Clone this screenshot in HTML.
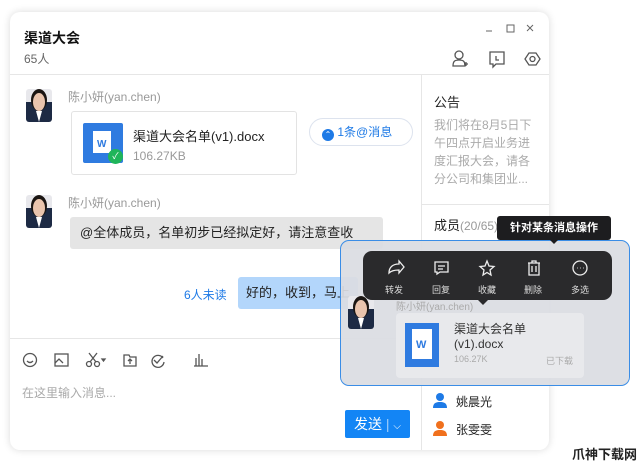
<!DOCTYPE html><html><head><meta charset="utf-8"><style>
*{margin:0;padding:0;box-sizing:border-box}
body{width:640px;height:460px;background:#fff;font-family:"Liberation Sans","Noto Sans CJK SC",sans-serif;position:relative;overflow:hidden}
.a{position:absolute}
.win{left:10px;top:12px;width:539px;height:438px;border-radius:10px;box-shadow:0 0 8px rgba(0,0,0,.15);background:#fff;overflow:hidden}
.av{width:26px;height:33px;border-radius:3px;background:linear-gradient(#e8e8ec 0 40%,#1d2a44 40%);overflow:hidden}
.av:before{content:"";position:absolute;left:7px;top:4px;width:12px;height:18px;border-radius:50%;background:#e9c4ad;box-shadow:0 -2px 0 2px #1a1512}
.av:after{content:"";position:absolute;left:10px;top:22px;width:6px;height:11px;background:#fff;clip-path:polygon(0 0,100% 0,50% 100%)}
.g{color:#999}
.icn{stroke:#555;fill:none;stroke-width:1.3}
</style></head><body>
<div class="a win">
 <div class="a" style="left:14px;top:16px;font-size:14px;font-weight:bold;color:#111">渠道大会</div>
 <div class="a" style="left:14px;top:38px;font-size:12px;color:#666">65人</div>
 <svg class="a" style="left:472px;top:10px" width="60" height="14"><path d="M4 9h6" stroke="#666"/><rect x="25" y="3" width="7" height="7" stroke="#666" fill="none"/><path d="M45 3l6 6M51 3l-6 6" stroke="#666"/></svg>
 <svg class="a icn" style="left:440px;top:36px" width="100" height="22"><circle cx="9" cy="7" r="4"/><path d="M3 18c0-5 2-6 6-6s6 1 6 6zM14 16h4M16 14v4"/><path d="M40 4h14v12h-8l-3 3v-3h-3z"/><path d="M46 8v4h3"/><path d="M75 11l4-6h7l4 6-4 6h-7z"/><circle cx="82.5" cy="11" r="2.5"/></svg>
 <div class="a" style="left:0;top:62px;width:539px;border-top:1px solid #e6e6e6"></div>
 <div class="a" style="left:411px;top:62px;height:376px;border-left:1px solid #e6e6e6"></div>
 <div class="a" style="left:0;top:326px;width:411px;border-top:1px solid #e6e6e6"></div>
 <div class="a" style="left:411px;top:192px;width:128px;border-top:1px solid #e6e6e6"></div>
 <div class="a av" style="left:16px;top:77px"></div>
 <div class="a g" style="left:58px;top:76px;font-size:12px">陈小妍(yan.chen)</div>
 <div class="a" style="left:61px;top:99px;width:226px;height:64px;border:1px solid #e3e3e3;border-radius:3px"></div>
 <div class="a" style="left:73px;top:111px;width:40px;height:40px;background:#2f7be0;border-radius:2px"><div class="a" style="left:10px;top:8px;width:18px;height:22px;background:#fff"></div><div class="a" style="left:14px;top:16px;color:#2f7be0;font-size:10px;font-weight:bold">W</div><div class="a" style="left:25px;top:26px;width:15px;height:15px;border-radius:50%;background:#1fb55a;color:#fff;font-size:9px;text-align:center;line-height:15px">✓</div></div>
 <div class="a" style="left:123px;top:114px;font-size:13px;color:#222">渠道大会名单(v1).docx</div>
 <div class="a g" style="left:123px;top:137px;font-size:12px">106.27KB</div>
 <div class="a" style="left:299px;top:106px;width:104px;height:28px;border:1px solid #dde3ee;border-radius:14px;color:#1e7ae6;font-size:12px;line-height:26px;padding-left:12px"><span style="display:inline-block;width:12px;height:12px;border-radius:50%;background:#1e7ae6;color:#fff;font-size:8px;line-height:12px;text-align:center;vertical-align:-1px">⌃</span> 1条@消息</div>
 <div class="a av" style="left:16px;top:183px"></div>
 <div class="a g" style="left:58px;top:182px;font-size:12px">陈小妍(yan.chen)</div>
 <div class="a" style="left:60px;top:205px;width:313px;height:32px;background:#e5e5e5;border-radius:3px;font-size:13px;line-height:32px;padding-left:10px;color:#222">@全体成员，名单初步已经拟定好，请注意查收</div>
 <div class="a" style="left:174px;top:274px;font-size:12px;color:#1e7ae6">6人未读</div>
 <div class="a" style="left:228px;top:265px;width:120px;height:32px;background:#b3d6fb;border-radius:3px;font-size:13px;line-height:32px;padding-left:8px;color:#222">好的，收到，马上</div>
 <svg class="a icn" style="left:12px;top:338px" width="190" height="20"><circle cx="8" cy="10" r="6.5"/><path d="M5 11q3 3 6 0"/><rect x="33" y="4" width="13" height="12"/><path d="M33 13l4-4 4 4"/><circle cx="67" cy="14" r="2.5"/><circle cx="75" cy="14" r="2.5"/><path d="M68 12l7-9M74 12l-7-9"/><path d="M80 9l3 0-1.5 2z" fill="#555"/><path d="M102 5h5l1 2h6v9h-12z"/><path d="M108 14v-5M106 11l2-2 2 2"/><path d="M141 8a6 6 0 1 0 1 4"/><path d="M132 10l3 3 6-7"/><path d="M172 16h14M174 16v-8M177 16v-12M180 16v-7"/></svg>
 <div class="a g" style="left:12px;top:372px;font-size:12px;color:#aaa">在这里输入消息...</div>
 <div class="a" style="left:335px;top:398px;width:65px;height:28px;background:#1385f5;border-radius:2px;color:#fff;font-size:14px;line-height:28px;padding-left:9px">发送 <span style="opacity:.6">|</span> <span style="font-size:10px">⌵</span></div>
 <div class="a" style="left:424px;top:80px;font-size:13px;color:#222">公告</div>
 <div class="a g" style="left:424px;top:104px;width:104px;font-size:12px;line-height:18px;color:#aaa">我们将在8月5日下午四点开启业务进度汇报大会，请各分公司和集团业...</div>
 <div class="a" style="left:424px;top:203px;font-size:13px;color:#222">成员<span class="g" style="font-size:12px">(20/65)</span></div>
 <svg class="a" style="left:422px;top:380px" width="16" height="46"><circle cx="8" cy="5" r="4" fill="#1e7ae6"/><path d="M1 16c0-5 3-6 7-6s7 1 7 6z" fill="#1e7ae6"/><circle cx="8" cy="33" r="4" fill="#f0701d"/><path d="M1 44c0-5 3-6 7-6s7 1 7 6z" fill="#f0701d"/></svg>
 <div class="a" style="left:446px;top:381px;font-size:12px;color:#222">姚晨光</div>
 <div class="a" style="left:446px;top:409px;font-size:12px;color:#222">张雯雯</div>
</div>
<div class="a" style="left:340px;top:240px;width:290px;height:146px;border:1px solid #3a8de6;border-radius:9px;background:rgba(218,221,226,.93)"></div>
<div class="a av" style="left:348px;top:296px"></div>
<div class="a" style="left:396px;top:313px;width:188px;height:65px;background:#e8e9ec;border-radius:4px"></div>
<div class="a" style="left:405px;top:323px;width:34px;height:44px;background:#2f7be0"><div class="a" style="left:7px;top:6px;width:20px;height:30px;background:#fff"></div><div class="a" style="left:11px;top:16px;color:#2f7be0;font-size:11px;font-weight:bold">W</div></div>
<div class="a" style="left:454px;top:322px;font-size:12px;line-height:15px;color:#333">渠道大会名单<br>(v1).docx</div>
<div class="a" style="left:454px;top:354px;font-size:9px;color:#aaa">106.27K</div>
<div class="a" style="left:546px;top:354px;font-size:9px;color:#aaa">已下载</div>
<div class="a" style="left:396px;top:298px;font-size:10px;color:#aaa">陈小妍(yan.chen)</div>
<div class="a" style="left:363px;top:251px;width:249px;height:49px;background:#2a2a2c;border-radius:9px"></div>
<div class="a" style="left:477px;top:299px;border:6px solid transparent;border-top-color:#2a2a2c"></div>
<svg class="a" style="left:363px;top:251px;stroke:#eee;fill:none;stroke-width:1.3" width="249" height="49"><path d="M26 22c0-6 4-9 10-9v-3l5 6-5 6v-3c-5 0-8 1-10 3z"/><path d="M72 11h13v10h-8l-3 2v-2h-2zM75 15h7M75 18h5"/><path d="M124 10l2 5 5 .5-4 3.5 1 5-4-2.5-4 2.5 1-5-4-3.5 5-.5z"/><path d="M165 12h12M169 12v-2h4v2M166 12v12h10v-12M169 15v6M173 15v6"/><circle cx="217" cy="17" r="7"/><path d="M214 17h.5M217 17h.5M220 17h.5" stroke-width="1.6"/></svg>
<div class="a" style="left:363px;top:283px;width:249px;font-size:9px;color:#ddd"><span class="a" style="left:22px">转发</span><span class="a" style="left:69px">回复</span><span class="a" style="left:115px">收藏</span><span class="a" style="left:161px">删除</span><span class="a" style="left:208px">多选</span></div>
<div class="a" style="left:497px;top:216px;width:114px;height:24px;background:#1d1d1f;border-radius:3px;color:#fff;font-size:11px;font-weight:bold;line-height:24px;text-align:center">针对某条消息操作</div>
<div class="a" style="left:550px;top:240px;border:4px solid transparent;border-top-color:#1d1d1f"></div>
<div class="a" style="left:572px;top:444px;font-size:13px;font-weight:bold;color:#222">爪神下载网</div>
</body></html>
